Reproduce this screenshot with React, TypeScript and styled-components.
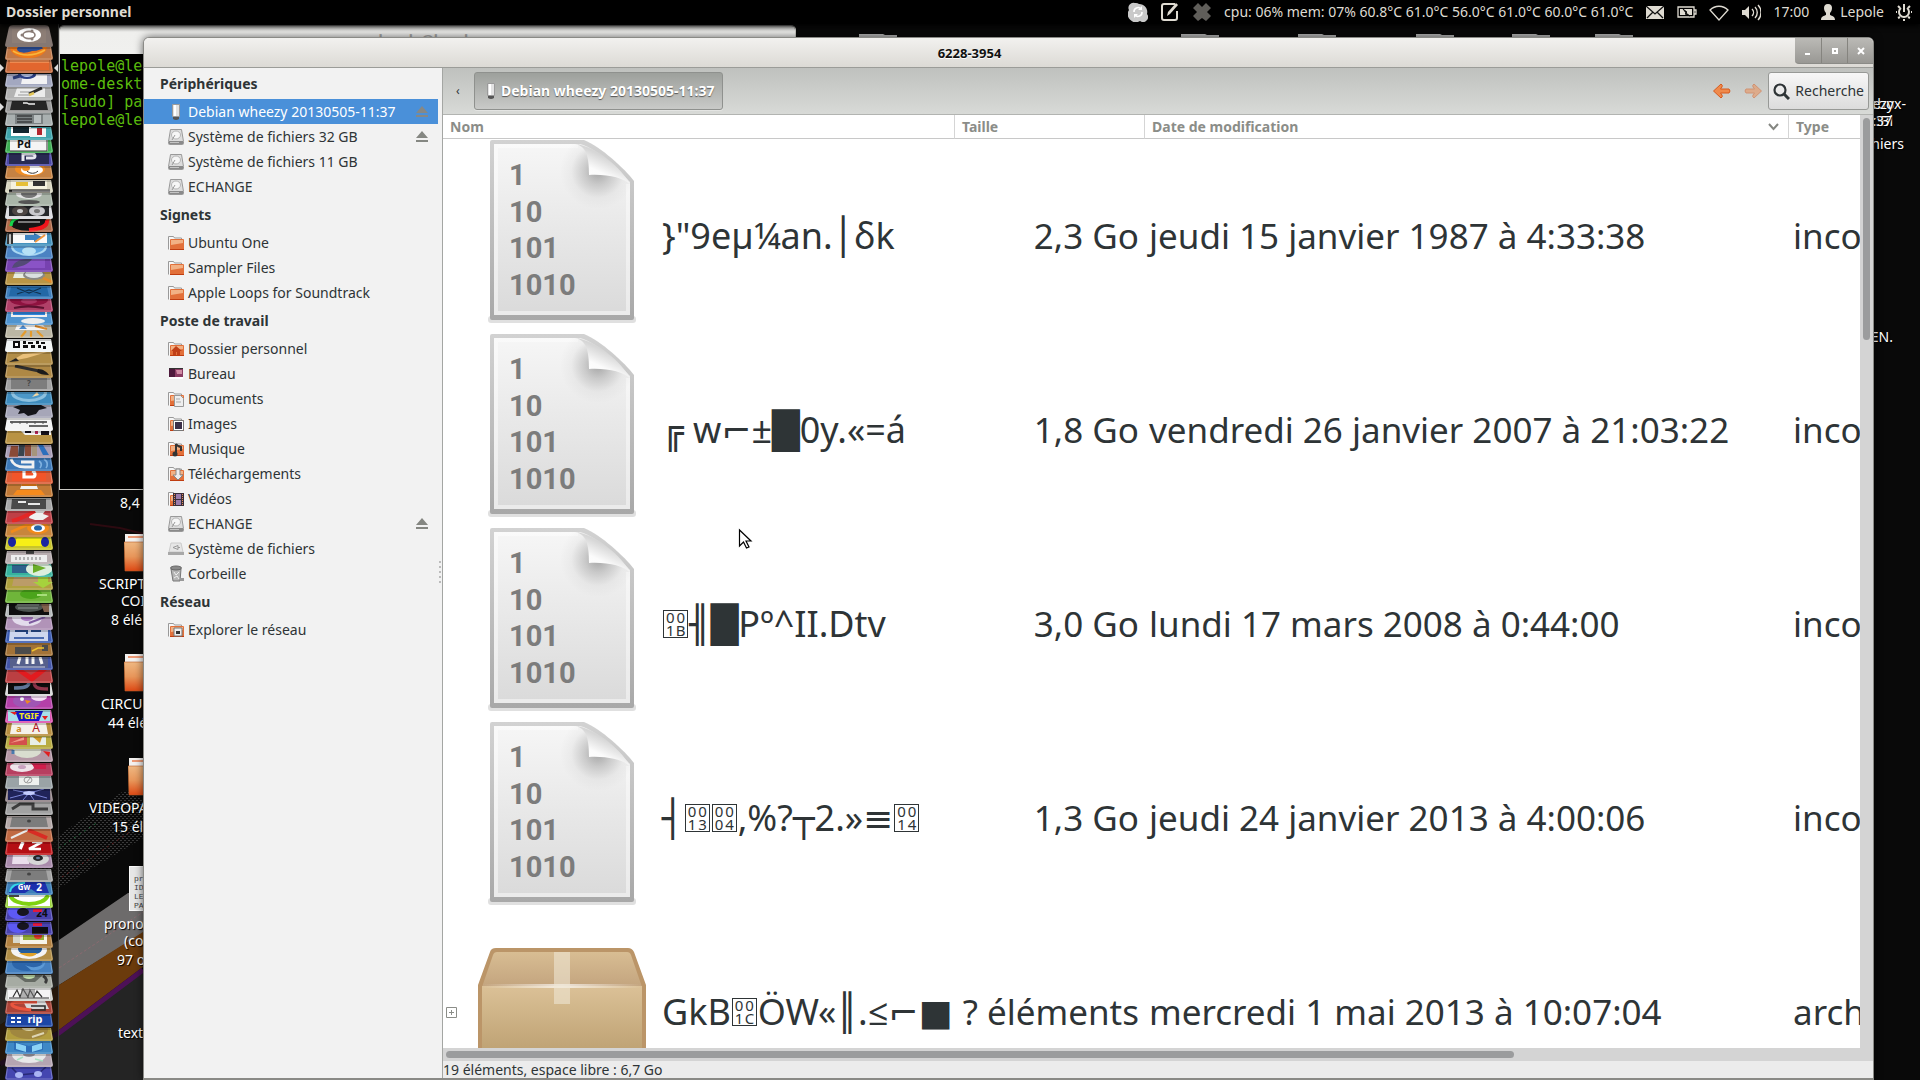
import React from "react";
import styled, { createGlobalStyle, css } from "styled-components";

const UI = '"Noto Sans", "Open Sans", "DejaVu Sans", sans-serif';

const GlobalStyle = createGlobalStyle`
  *, *::before, *::after { box-sizing: border-box; }
  html, body { margin: 0; height: 100%; overflow: hidden; background: #090909; }
  body { font: 14px/20px ${UI}; color: #2e3436; }
  button { font: inherit; color: inherit; border: 0; padding: 0; background: none; }
  ul { list-style: none; margin: 0; padding: 0; }
  svg { display: block; flex: none; }
  h1, h2 { margin: 0; font-size: inherit; }
`;

/* ---------- desktop ---------- */

const Desktop = styled.div`
  position: relative;
  height: 100vh;
  overflow: hidden;
  display: flex;
  flex-direction: column;
  background: #090909;
`;

const Wallpaper = styled.svg`
  position: absolute;
  left: 0;
  bottom: 0;
`;

const Pin = styled.div<{ $x: number; $y: number }>`
  position: absolute;
  left: ${(p) => p.$x}px;
  top: ${(p) => p.$y}px;
  white-space: nowrap;
  color: #fff;
  text-shadow: 1px 1px 1px #000;
`;

const EdgePin = styled.div<{ $right: number; $y: number }>`
  position: absolute;
  right: ${(p) => p.$right}px;
  top: ${(p) => p.$y}px;
  white-space: nowrap;
  color: #fff;
  text-shadow: 1px 1px 1px #000;
`;

const labels: [number, number, string][] = [
  [120, 493, "8,4"],
  [99, 574, "SCRIPT"],
  [121, 591, "COI"],
  [111, 610, "8 élé"],
  [101, 694, "CIRCU"],
  [108, 713, "44 élé"],
  [89, 798, "VIDEOPA"],
  [112, 817, "15 élé"],
  [104, 914, "prono"],
  [124, 931, "(co"],
  [117, 950, "97 o"],
  [118, 1023, "text"],
];

const edgeLabels: [number, number, string][] = [
  [14, 94, "ebox-"],
  [26, 94, "ezy"],
  [27, 111, "c:Bl"],
  [28, 111, ":37"],
  [16, 134, "chiers"],
  [27, 327, "EN."],
];

const tabs = [859, 1181, 1298, 1416, 1512, 1595];

const FolderIcon = () => (
  <svg width="40" height="38">
    <defs>
      <linearGradient id="fo" x1="0" y1="0" x2="0" y2="1">
        <stop offset="0" stopColor="#efb882" />
        <stop offset=".5" stopColor="#e8965a" />
        <stop offset="1" stopColor="#dd4814" />
      </linearGradient>
    </defs>
    <path d="M1 0h38v12H1z" fill="#f3f1ef" />
    <path d="M4 2h30v2H4z" fill="#ec9a76" />
    <path d="M0 8h40l-1 29H1z" fill="url(#fo)" stroke="#b8602c" strokeWidth=".6" />
  </svg>
);

const NoteThumb = styled.div`
  width: 44px;
  height: 45px;
  padding: 7px 4px;
  background: #e6e6e6;
  border: 1px solid #fafafa;
  color: #444;
  font: 8px/9px "Liberation Mono", monospace;
  text-shadow: none;
  overflow: hidden;
`;

/* ---------- top panel ---------- */

const Panel = styled.header`
  position: relative;
  z-index: 3;
  height: 24px;
  flex: none;
  display: flex;
  align-items: center;
  padding: 0 8px 0 6px;
  background: #000;
  color: #dfdbd2;
  box-shadow: 0 2px 5px #000;
`;

const PanelTitle = styled.div`
  flex: 1;
  font-weight: 700;
`;

const Indicators = styled.div`
  display: flex;
  align-items: center;
  gap: 12px;
`;

const Indicator = styled.button`
  display: flex;
  align-items: center;
  gap: 5px;
  white-space: nowrap;
`;

const Ic = ({ children, w = 20 }: { children: React.ReactNode; w?: number }) => (
  <svg width={w} height="20" viewBox={`0 0 ${w} 20`} fill="none" stroke="#dfdbd2" strokeWidth="1.6">
    {children}
  </svg>
);

const TopPanel = () => (
  <Panel>
    <PanelTitle>Dossier personnel</PanelTitle>
    <Indicators>
      <Indicator aria-label="Skype">
        <Ic>
          <path d="M7 1a5 5 0 0 1 4 1 8 8 0 0 1 8 10 5 5 0 0 1-7 7A8 8 0 0 1 1 8a5 5 0 0 1 6-7z" fill="#c9c9c9" stroke="none" />
          <path d="M6 10a4 4 0 0 1 7-3M14 10a4 4 0 0 1-7 3" stroke="#fff" />
          <path d="M14 4v4h-4zM6 16v-4h4z" fill="#fff" stroke="none" />
        </Ic>
      </Indicator>
      <Indicator aria-label="Notes">
        <Ic>
          <path d="M15 2H4a2 2 0 0 0-2 2v12a2 2 0 0 0 2 2h11a2 2 0 0 0 2-2V9" strokeWidth="2" />
          <path d="M18 3l-8 9-3 2 1-4 8-9" fill="#dfdbd2" stroke="none" />
        </Ic>
      </Indicator>
      <Indicator aria-label="Dropbox">
        <Ic>
          <path d="M6 1l4 4 4-4 5 5-4 4 4 4-5 5-4-3-4 3-5-5 4-4-4-4z" fill="#605e5a" stroke="none" />
        </Ic>
      </Indicator>
      <Indicator>cpu: 06% mem: 07% 60.8°C 61.0°C 56.0°C 61.0°C 60.0°C 61.0°C</Indicator>
      <Indicator aria-label="Messages">
        <Ic>
          <path d="M1 4h18v13H1z" fill="#dfdbd2" stroke="none" />
          <path d="M1 4l9 8 9-8M2 16l6-6M18 16l-6-6" stroke="#111" strokeWidth="1.3" />
        </Ic>
      </Indicator>
      <Indicator aria-label="Batterie">
        <Ic>
          <path d="M1 5h16v10H1zM17 8h2v4h-2" strokeWidth="1.3" />
          <path d="M3 7h12v6H3z" fill="#dfdbd2" stroke="none" />
          <path d="M6 7l4 3-1 1 4 3-5-2 1-1z" fill="#000" stroke="#000" strokeWidth=".8" />
        </Ic>
      </Indicator>
      <Indicator aria-label="Réseau sans fil">
        <Ic>
          <path d="M1 8c5-5 13-5 18 0l-9 10z" strokeWidth="1.3" />
        </Ic>
      </Indicator>
      <Indicator aria-label="Volume">
        <Ic>
          <path d="M1 8h3l4-4v13l-4-4H1z" fill="#dfdbd2" stroke="none" />
          <path d="M11 7c2 2 2 5 0 7M14 5c3 3 3 8 0 11M17 3c4 4 4 11 0 15" strokeWidth="1.4" />
        </Ic>
      </Indicator>
      <Indicator>17:00</Indicator>
      <Indicator>
        <Ic w={14}>
          <path d="M7 2c3 0 4 2 4 4s-1 4-2 5v2c2 1 5 1 5 5H0c0-4 3-4 5-5v-2C4 10 3 8 3 6s1-4 4-4z" fill="#dfdbd2" stroke="none" />
        </Ic>
        Lepole
      </Indicator>
      <Indicator aria-label="Session">
        <Ic w={16}>
          <path d="M5 6a5 5 0 1 0 6 0M8 2v8" strokeWidth="2" />
          <path d="M8 17v2M1 10H0M16 10h-1M2 4l2 2M14 4l-2 2M2 16l2-1M14 16l-2-1" strokeWidth="2" />
        </Ic>
      </Indicator>
    </Indicators>
  </Panel>
);

/* ---------- launcher ---------- */

const Launcher = styled.nav`
  position: relative;
  z-index: 1;
  flex: 1;
  min-height: 0;
  width: 59px;
  padding: 1px 0 0 5px;
  display: flex;
  flex-direction: column;
  background: rgba(14, 12, 10, 0.75);
  border-right: 1px solid #3a3a3a;
`;

const Stack = styled.ul`
  flex: 1;
  min-height: 0;
  margin-bottom: -1px;
  display: flex;
  flex-direction: column;
  justify-content: space-between;
`;

const Tile = styled.button`
  display: block;
`;

const Arrow = styled.i<{ $y: number; $right?: boolean }>`
  position: absolute;
  top: ${(p) => p.$y}px;
  border: 4px solid transparent;
  ${(p) =>
    p.$right
      ? css`
          right: 0;
          border-left-width: 0;
          border-right-color: #ddd;
        `
      : css`
          left: 0;
          border-right-width: 0;
          border-left-color: #ddd;
        `}
`;

const T = (x: number, y: number, s: number, f: string, t: string, w = 700) => (
  <text x={x} y={y} fontSize={s} fill={f} fontWeight={w} fontFamily={UI} textAnchor="middle">
    {t}
  </text>
);
const P = (d: string, f: string) => <path d={d} fill={f} />;
const S = (d: string, c: string, w = 1.5) => <path d={d} stroke={c} strokeWidth={w} fill="none" />;
const E = (x: number, y: number, rx: number, ry: number, f: string) => <ellipse cx={x} cy={y} rx={rx} ry={ry} fill={f} />;

type Launch = [string, string, React.ReactNode];
const launch: Launch[] = [
  ["Firefox", "#c07848", <>{P("M5 0h37c0 6-8 11-19 11S5 6 5 0z", "#e8771a")}{E(25, 2, 13, 5, "#2c4f96")}{P("M5 0c8 6 14 7 22 4 6 0 10-2 14-4 0 7-8 11-18 11S6 6 5 0z", "#ee7b1c")}{S("M8 4c8 5 20 6 32-1", "#f8b63c", 1.6)}</>],
  ["Fichiers", "#c4693c", <>{P("M5 0h39v10H5z", "#e2662e")}{P("M5 0h39v3H5z", "#ef8a50")}</>],
  ["Recherche", "#a3a8c0", <>{P("M18 1h24v9H16z", "#f2f2f4")}{S("M8 4l7-2", "#26386f", 3)}{E(22, 1, 9, 4, "#2a3f86")}{E(22, 0, 6, 3, "#b6c4e4")}</>],
  ["Éditeur", "#b3b3b3", <>{P("M12 1h28v9H9z", "#ececec")}{S("M15 5h14M13 8h12", "#999", 1)}{S("M24 7L37 1", "#2a2a2a", 3)}{S("M24 8l5-2", "#e3c65a", 2.5)}</>],
  ["Terminal", "#9c9c9c", <>{P("M7 1h34l2 9H5z", "#262626")}{S("M18 3h4l2 1h6", "#eee", 1.3)}</>],
  ["Calculatrice", "#a9b0b0", <>{P("M10 1h28v10H10z", "#7c8283")}{S("M12 3h15M12 6h15M12 9h15", "#4a4d4e", 1.8)}{P("M29 2h7v8h-7z", "#b9bfbf")}</>],
  ["Photos", "#3fa5ac", <>{P("M6 0h20v9H6z", "#fff")}{P("M8 0h16v6H8z", "#12262e")}{P("M25 1h16v9H25z", "#f4f4f4")}{P("M32 1h5v7h-5z", "#b3252c")}</>],
  ["Pure Data", "#3daf53", <>{P("M5 0h38v11H5z", "#f4f4f4")}{T(19, 8, 11, "#111", "Pd")}{S("M42 0v11H5", "#333", 1)}</>],
  ["Processing", "#4c49a8", <>{P("M4 0h40v11H4z", "#282a52")}{S("M18 8V1h9c4 0 4 4 0 4h-6", "#e8e8f0", 3)}</>],
  ["Scratch", "#c58243", <>{E(25, 3, 15, 7, "#f08e26")}{E(27, 4, 11, 5, "#fff")}{E(21, 2, 4, 3, "#f08e26")}{S("M22 5c3 3 8 3 11 0", "#333", 1)}</>],
  ["Montage", "#d9d6c0", <>{P("M6 0h36v9H6z", "#f5f2df")}{P("M11 2h12v4H11z", "#e6bf36")}{P("M28 1h12v5H28z", "#333")}{S("M4 11h41", "#111", 3)}{S("M7 11h38", "#eee", 0.8)}</>],
  ["Webcam", "#a9b5a8", <>{E(24, 1, 13, 5, "#e3e3e3")}{E(24, 1, 8, 4, "#777")}{E(24, 9, 11, 2, "#555")}</>],
  ["Cassettes", "#dcdce0", <>{P("M4 0h40v10H4z", "#26282b")}{E(15, 5, 8, 5, "#4d4644")}{E(15, 5, 3, 2, "#ccc")}{E(32, 5, 8, 5, "#c9c9cd")}{E(32, 5, 3, 2, "#777")}</>],
  ["Radio", "#b26a48", <>{E(24, 4, 19, 8, "#141414")}{S("M6 7C6-1 14-2 20-2", "#17d24a", 3)}{S("M42 1c1 6-6 9-18 10", "#f0151b", 4)}{S("M13 3h22", "#9a9a9a", 1.5)}</>],
  ["Conversion", "#4492bd", <>{P("M6 0h36v10H6z", "#fafafa")}{P("M2 0h6v11H2z", "#333")}{S("M5 1v10", "#eee", 1.5)}{P("M20 2h9V0l8 4-8 5V7h-9z", "#3d82c0")}{S("M30 9l10-7", "#f0963a", 2)}</>],
  ["Disque", "#4b82c2", <>{E(24, 1, 18, 9, "#a9d7f2")}{E(24, 0, 16, 8, "#5da4df")}{E(24, 5, 7, 4, "#b7e1f6")}</>],
  ["Pinceau", "#7742b0", <>{P("M22 0h18v9H12z", "#8a53c6")}{P("M7 9c3-8 9-8 14-9l6 0c-4 6-12 8-20 9z", "#544a77")}</>],
  ["Recherche de fichiers", "#b99646", <>{P("M10 0h14v6H8z", "#e8efe0")}{E(29, 3, 11, 5, "#8a8a86")}{E(29, 2, 9, 4, "#d9dfe0")}{S("M38 6l9 4", "#e08a2a", 2.5)}</>],
  ["Cube", "#3f7fbc", <>{P("M6 1h36l2 9H4z", "#2368a6")}{S("M12 2l12 5 12-5M12 8l12-4 12 4", "#12324f", 1.3)}</>],
  ["Rosegarden", "#b04068", <>{E(24, 1, 19, 6, "#8f1340")}{S("M9 9c8-2 20-2 30 0", "#5d1230", 2.2)}{E(24, 2, 8, 3, "#a93462")}</>],
  ["Écran", "#4f94d0", <>{P("M6 0h36v5H6z", "#f0f0f0")}{P("M8 0h32v3H8z", "#2f84da")}{E(28, 9, 12, 3, "#eee")}</>],
  ["Dessin", "#bcb7a4", <>{P("M12 0h26l4 5H10z", "#f4f4f4")}{P("M18 0l4 4h-8z", "#4e8ccf")}{S("M16 12l5-6M26 6v6M32 6l6 6", "#e39b2d", 2.2)}{S("M30 1l12 3", "#d9892d", 2)}</>],
  ["QR", "#f2f5f5", <>{P("M8 2h7v7H8zM18 2h3v3h-3zM23 3h5v2h-5zM31 2h3v3h-3zM36 3h4v2h-4zM18 6h5v3h-5zM26 6h4v3h-4zM33 6h3v3h-3zM38 7h3v3h-3z", "#0e0e0e")}{P("M10 4h3v3h-3z", "#fff")}</>],
  ["Crayon", "#b18d47", <>{P("M6 9l12-7 20-2h4L22 6z", "#e9c07a")}{P("M4 10l7-4 3 3z", "#222")}</>],
  ["Peinture", "#ae8845", <>{S("M10 1l24 5", "#2d2d2d", 3)}{P("M33 4c5 0 9 3 11 6-6 0-10-1-12-3z", "#1b1b1b")}</>],
  ["Aide", "#a3a3a3", <>{P("M6 0h36v11H6z", "#7d7d7d")}{T(24, 8, 8, "#444", "?")}</>],
  ["Navigateur", "#3d8bbd", <>{E(24, 1, 18, 9, "#8cc0df")}{E(24, 0, 15, 7, "#4b97c8")}{P("M27 5l5-5 2 3z", "#f4d9a5")}</>],
  ["Inkscape", "#a6a6b8", <>{P("M8 2l8-2h20l6 3-8 2-3 4-8 2-4-3-6 1 2-4z", "#15151a")}</>],
  ["Polices", "#f4f4f4", <>{S("M5 4h37", "#333", 1.6)}{S("M24 8h19", "#444", 1.6)}{S("M7 6v-3M15 6v-3M22 6v-3M30 6v-3M38 6v-3", "#555", 1)}</>],
  ["Pingouin", "#b99344", <>{P("M16 0h30v4H20z", "#f4f4f4")}{P("M20 0h6v2h-6zM36 0h8v4h-8z", "#17121a")}{P("M30 0h3v3h-3z", "#b9295a")}</>],
  ["Livres", "#a89db5", <>{P("M6 1h7v11H4zM20 0h6v11h-6z", "#8a4a37")}{P("M14 0h6l-1 11h-6z", "#39434d")}{P("M26 0h6v11h-5z", "#a5957c")}{P("M33 0h5l6 10h-6z", "#2d6fbc")}</>],
  ["Wifi", "#3d79b8", <>{S("M6 1c2 6 6 8 14 8h8V4H16", "#f1f1f1", 2.8)}{S("M34 3c3 2 3 4 1 7M39 1c4 3 4 6 2 9", "#7fb1e0", 1.6)}</>],
  ["Dosbox", "#dd5c36", <>{P("M7 0h34v10H7z", "#f2552a")}{S("M19 0v6h8c4 0 4-5 0-6", "#fff", 3.2)}</>],
  ["VLC", "#c27a36", <>{P("M17 0h14l2 5H15z", "#f2f2f2")}{P("M17 0h14l1 2H16z", "#e67d19")}{P("M12 6h24l4 5H8z", "#f58a1d")}</>],
  ["TS Craft", "#a8a8a8", <>{P("M7 1h34v10H6z", "#4a4a4a")}{S("M13 4h8M23 6h12", "#e8e8e8", 2)}</>],
  ["Outils", "#bf3f46", <>{P("M26 0h14l-2 3 6 2-6 4-8 0-6-2z", "#f0f0f0")}{S("M7 10C16 8 22 4 30 0", "#e32727", 4)}</>],
  ["Blender", "#c8853c", <>{S("M6 8L22 1h12", "#f28a1a", 3)}{E(33, 4, 11, 6, "#f28a1a")}{E(33, 4, 7, 4, "#fff")}{E(33, 4, 4, 2.6, "#2465a8")}</>],
  ["Casque", "#c9c52a", <>{P("M12 1h26l4 8H8z", "#f7ef16")}{E(7, 5, 4, 5, "#1a24a0")}{E(40, 5, 4, 5, "#1a24a0")}</>],
  ["Règle", "#b9aeb0", <>{P("M6 4h36v7H6z", "#eee")}{P("M21 0h8v3h-8z", "#444")}{S("M11 6v3M15 6v3M19 6v3M23 6v3M27 6v3M31 6v3M35 6v3", "#777", 1)}</>],
  ["Lecture", "#36b39d", <>{P("M7 1h16v8H7z", "#2f628c")}{E(34, 5, 13, 7, "#ddeedd")}{P("M28 0l13 4-13 5z", "#6aae29")}</>],
  ["Téléchargement", "#b0a13e", <>{P("M9 0h25v9H7z", "#bb9c68")}{P("M33 0h10v5h5L38 11 28 5h5z", "#a6d23c")}</>],
  ["Ballon", "#6fb53a", <>{E(26, 4, 11, 5, "#4ba41b")}{P("M32 4h10v2H32z", "#a7de7a")}</>],
  ["Micro", "#b5b9ba", <>{P("M4 0h40v11H4z", "#0f0f0f")}{E(24, 3, 14, 5, "#4c5350")}{S("M12 1h22M13 4h20", "#8b9490", 1)}{P("M36 0h8v8h-5z", "#80604c")}</>],
  ["CD", "#b193b8", <>{E(22, 1, 15, 8, "#e3dcec")}{E(22, 1, 6, 3, "#a978c2")}{S("M24 6l16-6", "#7d5aa0", 2)}</>],
  ["Tableur", "#3b5cb3", <>{P("M5 0h38v11H4z", "#cdd7ee")}{S("M10 1h12v3M26 1h10", "#274a8a", 2)}{S("M9 8h30", "#4b6cb0", 2)}</>],
  ["Circuit", "#a37337", <>{P("M10 4h16v7H10zM37 2h6v6h-6z", "#4b4b4b")}{S("M27 8l6-3h6", "#f0c531", 1.5)}</>],
  ["Titres", "#4356a8", <>{P("M5 0h38v11H5z", "#56608c")}{S("M15 0l-2 7M22 0v7M28 0v7M35 0l2 7", "#f4f4f4", 3)}{S("M8 10h32", "#c7cce0", 1)}</>],
  ["Vue", "#bb3f42", <>{P("M10 0h8l8 5 8-5h8L27 12z", "#e21b1f")}</>],
  ["SC", "#d7d7d7", <>{P("M3 0h42v11H3z", "#0c0c0c")}{S("M9 5c10 0 14-1 15-5", "#5f7597", 3.5)}{S("M43 6c-12 0-13-2-14-6", "#8e3449", 3.5)}</>],
  ["Pidgin", "#b440a8", <>{E(22, 5, 14, 7, "#9f56b4")}{E(34, 1, 8, 4, "#f5dff4")}{P("M20 4l6 1-4 3z", "#ef8a21")}{E(17, 3, 2, 2, "#f4f4f4")}</>],
  ["TGIF", "#dc4fae", <>{P("M3 0h42v11H3z", "#a8dfea")}{P("M10 1h28l-4 10H14z", "#1717c4")}{T(24, 9, 9, "#f5e81b", "TGIF")}{P("M5 2h7l-2 3zM37 6h6l-3 4z", "#e31d1d")}</>],
  ["Dictionnaire", "#b98f40", <>{P("M7 0h34l2 11H5z", "#f5f2ea")}{T(14, 9, 9, "#c98a28", "a")}{T(31, 9, 12, "#b3171d", "A", 400)}</>],
  ["Images", "#b8ac41", <>{P("M5 1h17v8H4z", "#d3504c")}{P("M25 1h16v8H25z", "#e8efe6")}{P("M28 1h9l-2 6z", "#cf9a28")}{P("M5 7l14-6v3z", "#f19a8a")}</>],
  ["Base", "#b598a6", <>{E(22, 2, 14, 7, "#d9ddcf")}{S("M8 1v4", "#4a7aae", 3)}{P("M38 2l7 1-1 5z", "#e01e20")}</>],
  ["Gravure", "#b73f60", <>{E(17, 4, 12, 5, "#efe4ea")}{E(17, 4, 4, 2, "#c9a2c0")}{P("M27 1h14v5H30z", "#d01e4c")}</>],
  ["Graphe", "#9aa3a6", <>{P("M14 0h20v9H14z", "#eef1ef")}{S("M19 4a4 3 0 1 0 8 0a4 3 0 1 0-8 0M22 6l4-5", "#999", 1)}</>],
  ["Éclairs", "#8d7f84", <>{P("M3 0h42v11H3z", "#20245a")}{S("M5 9L24 4 42 9M8 1l16 3 15-4M18 11l6-7 5 7", "#7c86d8", 1)}{E(24, 4, 6, 2, "#c4cdfd")}</>],
  ["Signal", "#a2a2a2", <>{S("M7 7l8-5h13v5h15", "#3c3c3c", 3)}</>],
  ["Tiroir", "#b4a9a8", <>{P("M7 1h34l2 10H5z", "#7c7c7c")}{E(24, 5, 2, 1.5, "#444")}</>],
  ["Réglages", "#c16a43", <>{S("M6 9L23 1", "#e9e9e9", 2.2)}{S("M23 1l19 8", "#d82c24", 4)}</>],
  ["Douze", "#c2181c", <>{P("M3 0h42v11H3z", "#b40f14")}{S("M18 0l-3 7", "#fff", 3.5)}{S("M27 0h10L24 7h12", "#fff", 2.6)}</>],
  ["Capture", "#a98bab", <>{P("M8 0h16v9H7z", "#eadfec")}{E(33, 4, 11, 6, "#d7d7d7")}{E(33, 3, 5, 3, "#26262a")}{E(33, 3, 2, 1.3, "#679")}</>],
  ["Archives", "#a4a4a4", <>{P("M7 1h34l2 10H5z", "#7d7d7d")}{E(24, 5, 2, 1.5, "#444")}</>],
  ["GW2", "#3c7fba", <>{P("M4 11C5 3 12 0 22 0h18l4 11H32l-6-4-6 4z", "#1c2fae")}{S("M5 10C6 4 12 1 20 1", "#34d7e8", 2)}{T(19, 8, 8, "#fff", "Gw")}{T(34, 9, 10, "#fff", "2")}</>],
  ["Cercle", "#9bd43d", <>{P("M3 0h42v11H3z", "#fff")}{S("M5 0c4 12 34 12 38 0", "#7fd211", 4)}{P("M4 0h10v2H4z", "#555")}</>],
  ["Cinelerra 24", "#4942ad", <>{E(13, 4, 10, 7, "#5d59f4")}{E(18, 4, 6, 4, "#17151f")}{T(37, 9, 10, "#0c0c10", "24")}{P("M28 1h9v3h-9z", "#df193f")}</>],
  ["Cinelerra", "#4942ad", <>{E(13, 4, 10, 7, "#5d59f4")}{E(18, 4, 6, 4, "#17151f")}{P("M27 5h16v7H27z", "#0c0c10")}{P("M28 1h9v3h-9z", "#df193f")}</>],
  ["Photothèque", "#b38140", <>{P("M8 0h12v8H8z", "#d8d8cc")}{P("M15 0h27v9H15z", "#f6f3e8")}{P("M18 0h21v5H18z", "#93ae36")}{E(33, 1, 4, 3, "#dc3526")}</>],
  ["Globe", "#b28e47", <>{E(24, 2, 18, 9, "#f4f4f4")}{E(25, 1, 12, 6, "#255f9e")}{P("M14 5h18c-2 4-10 5-18 0z", "#dfa22a")}</>],
  ["Thunderbird", "#4580c0", <>{E(22, 2, 15, 8, "#2c65aa")}{P("M20 4c8 4 16 2 20-3 0 6-6 9-14 8z", "#5c9ad6")}</>],
  ["Souris", "#a6aba3", <>{P("M10 0h28l-8 7H20z", "#656a63")}{E(24, 1, 6, 3, "#bedaa8")}{S("M38 1c4 2 4 5 2 7", "#3b3b3b", 3)}</>],
  ["Ardour", "#cfd2cf", <>{P("M3 0h42v11H3z", "#f4f4f4")}{S("M4 10h40M8 9l4-7 3 7 3-8 5 8 2-7 4 7 3-6 5 6", "#333", 1.2)}{P("M16 1h14v8H16z", "#7778")}</>],
  ["Câble", "#ad4438", <>{P("M18 0h22l4 8H22z", "#d8d8d8")}{S("M32 1C22 1 8 0 7 3s8 5 20 6", "#ea553e", 3.2)}{S("M26 5h14v4H26", "#2b2b2b", 1.6)}</>],
  ["Rip", "#224ba8", <>{P("M3 0h42v11H3z", "#1c46a6")}{P("M6 3h4v2H6zM12 3h4v2h-4zM6 7h4v2H6zM12 7h4v2h-4z", "#fff")}{T(30, 9, 11, "#fff", "rip")}</>],
  ["Disque doré", "#b29d3e", <>{E(24, 2, 19, 9, "#a0873f")}{E(24, 0, 7, 3, "#d8cfa2")}{S("M27 9l12-4", "#ded6b4", 2)}</>],
  ["Mixxx", "#3e88c6", <>{P("M9 1l15 4 14-4v8l-12 3h-4L9 9z", "#2d6fb8")}{P("M11 2l10 3v6L11 8zM37 2L27 5v6l10-3z", "#8bd2f5")}</>],
  ["Lecteur CD", "#b5a5b2", <>{E(24, 1, 17, 8, "#e8e8ea")}{E(24, 0, 6, 3, "#9b96a0")}{S("M30 5l8 2M12 6l6-3", "#a7dfc0", 1.5)}</>],
  ["Tracé", "#4446b0", <>{S("M7 1l7 7 20-2 7-6", "#282a78", 1.5)}{E(14, 8, 4, 3, "#a9b4f4")}{E(33, 7, 4, 3, "#a9b4f4")}</>],
];

const LauncherBar = () => (
  <Launcher>
    <Tile aria-label="Accueil">
      <svg width="48" height="22">
        <path d="M4 2q1-2 4-2h32q3 0 4 2l4 18q0 2-2 2H2q-2 0-2-2z" fill="#857873" />
        <path d="M7 4h34v14H7z" fill="#96847a" opacity=".5" />
        <ellipse cx="24" cy="10" rx="12" ry="7" fill="#fff" />
        <ellipse cx="24" cy="10" rx="6" ry="3.6" fill="none" stroke="#8a7c76" strokeWidth="1.6" />
        <circle cx="17" cy="10" r="1.5" fill="#8a7c76" />
        <circle cx="27" cy="6" r="1.5" fill="#8a7c76" />
        <circle cx="27" cy="14" r="1.5" fill="#8a7c76" />
      </svg>
    </Tile>
    <Stack>
      {launch.map(([name, color, art]) => (
        <li key={name}>
          <Tile aria-label={name}>
            <svg width="48" height="13">
              <path d="M2 0h44l2 11q0 2-2 2H2q-2 0-2-2z" fill={color} />
              {art}
              <path d="M2.5 0L1 11q0 1 1 1h44q1 0 1-1L45.500 0" fill="none" stroke="#fff" strokeOpacity=".28" />
              <path d="M2 0h44v2H2z" fill="#000" opacity=".18" />
            </svg>
          </Tile>
        </li>
      ))}
    </Stack>
    <Arrow $y={40} />
    <Arrow $y={79} />
    <Arrow $y={40} $right />
  </Launcher>
);

/* ---------- terminal ---------- */

const TerminalWindow = styled.section`
  position: absolute;
  left: 59px;
  top: 25px;
  width: 737px;
  height: 465px;
  background: #000;
  border: 1px solid #c9c8c3;
  border-top-color: #888;
  border-radius: 5px 5px 0 0;
`;

const TerminalTitle = styled.div`
  height: 28px;
  padding-top: 4px;
  text-align: center;
  font-weight: 700;
  color: #aaa;
  background: linear-gradient(#b5b5b2, #efefed 6px, #f0f0ee);
  border-radius: 4px 4px 0 0;
`;

const TerminalText = styled.pre`
  margin: 3px 1px;
  color: #5cbf0e;
  font: 15px/18px "DejaVu Sans Mono", "Liberation Mono", monospace;
`;

/* ---------- file manager ---------- */

const FileWindow = styled.main`
  position: absolute;
  z-index: 2;
  left: 143px;
  right: 46px;
  top: 37px;
  bottom: 0;
  display: flex;
  flex-direction: column;
  background: #f2f2f2;
  border: 1px solid #8a8a86;
  border-bottom-width: 2px;
  border-radius: 6px 6px 0 0;
  overflow: hidden;
  box-shadow: 0 0 8px rgba(0, 0, 0, 0.6);
`;

const TitleBar = styled.header`
  flex: none;
  height: 30px;
  display: flex;
  background: linear-gradient(#f2f1ef, #dcdad5);
  border-bottom: 1px solid #9b9c98;
  color: #111;
`;

const TitleText = styled.h1`
  flex: 1;
  text-align: center;
  font-size: 13px;
  line-height: 30px;
  font-weight: 700;
  text-shadow: 0 1px #fff;
`;

const WindowButtons = styled.div`
  width: 78px;
  height: 26px;
  display: grid;
  grid-template-columns: repeat(3, 1fr);
  background: linear-gradient(#bbbab6, #999894);
  border-bottom: 1px solid #8b8b87;
  border-radius: 0 0 0 4px;
`;

const WindowButton = styled.button`
  display: grid;
  place-items: center;
  & + & { border-left: 1px solid #85847f; }
`;

const Body = styled.div`
  flex: 1;
  min-height: 0;
  display: flex;
`;

const Sidebar = styled.nav`
  position: relative;
  flex: none;
  width: 299px;
  padding-right: 4px;
  background: #f2f2f2;
  border-right: 1px solid #a4a6a3;
`;

const Grip = styled.i`
  position: absolute;
  right: 1px;
  top: 493px;
  width: 2px;
  height: 24px;
  background: repeating-linear-gradient(#bbb 0 2px, transparent 2px 5px);
`;

const GroupTitle = styled.h2`
  padding: 0 16px;
  line-height: 31px;
  font-weight: 700;
`;

const Place = styled.button<{ $active?: boolean }>`
  width: 100%;
  height: 25px;
  padding: 0 10px 0 24px;
  display: flex;
  align-items: center;
  gap: 4px;
  text-align: left;
  ${(p) => p.$active && css`
    background: #4a90d9;
    color: #fff;
  `}
`;

const PlaceName = styled.span`
  flex: 1;
  white-space: nowrap;
`;

const Usb = () => (
  <svg width="16" height="18">
    <path d="M4.500 1.500h7v12h-7z" fill="#e2e2e2" stroke="#9a9a9a" />
    <path d="M6 2h2v11H6z" fill="#fff" />
    <path d="M5 14h6v2q-3 2-6 0z" fill="#555" />
  </svg>
);

const Disk = () => (
  <svg width="16" height="16">
    <path d="M2.500.5h11l2 12v2q0 1-1 1h-13q-1 0-1-1v-2z" fill="#dcdcdc" stroke="#999" />
    <ellipse cx="8" cy="6" rx="4.500" ry="4" fill="#f6f6f6" stroke="#b5b5b5" />
    <path d="M7 6l-3 5" stroke="#999" />
    <path d="M1 12h14v3H1z" fill="#8a8a8a" />
    <path d="M2 13h9v1H2z" fill="#c4c4c4" />
  </svg>
);

const Drive = () => (
  <svg width="16" height="16">
    <path d="M3 2h10l2 9H1z" fill="#e6e6e6" stroke="#ccc" />
    <path d="M5 6.500l5-2v4zM10 6.500h2" fill="none" stroke="#999" />
    <path d="M0 11h16v3H0z" fill="#a8a8a8" />
  </svg>
);

const Trash = () => (
  <svg width="16" height="18">
    <path d="M3 4h10l-1 12H5z" fill="#b5b5b5" stroke="#777" />
    <ellipse cx="8" cy="3" rx="5.500" ry="2" fill="#8a8a8a" stroke="#666" />
    <path d="M6 7l2 3 3-3M6 13l3-2 2 3" stroke="#eee" fill="none" />
    <path d="M12 13h4v3h-4z" fill="#999" />
  </svg>
);

const Desk = () => (
  <svg width="16" height="16">
    <path d="M1 2h14v11H1z" fill="#fff" />
    <path d="M1 2h14v9H1z" fill="#8a3b62" />
    <path d="M1 2h6v9H1z" fill="#4e1a3c" />
    <path d="M8 4h6v4H9z" fill="#cf8ba4" />
    <path d="M1 2h14v1H1z" fill="#333" />
  </svg>
);

const marks: Record<string, React.ReactNode> = {
  plain: null,
  home: <path d="M3 10l5-5 6 5h-2v4H9v-3H8v3H5v-4z" fill="#c03f17" />,
  doc: <><path d="M6.500 4.500h6l3 3v8h-9z" fill="#eee" stroke="#999" /><path d="M8 8h4M8 11h5" stroke="#aaa" /></>,
  image: <><path d="M5.500 4.500h10v10h-10z" fill="#fff" stroke="#777" /><path d="M7 6h7v7H7z" fill="#3b3048" /></>,
  music: <><path d="M8 13V3q1 2 5 3v4" fill="none" stroke="#333" strokeWidth="2" /><circle cx="7" cy="13" r="2.500" fill="#333" /></>,
  down: <path d="M8 3h4v6h3l-5 5-5-5h3z" fill="#eee" stroke="#888" />,
  video: <><path d="M5 2h11v13H5z" fill="#392f3a" /><path d="M8 3h5v5H8zM8 9h5v5H8z" fill="#9a7bab" /><path d="M6.500 3v12M14.500 3v12" stroke="#e88a55" strokeDasharray="1 1" /></>,
  net: <><path d="M6 6h8v8H6z" fill="#eee" stroke="#777" /><path d="M8 9h4v3H8z" fill="#333" /></>,
};

const Folder = ({ mark = "plain" }: { mark?: string }) => (
  <svg width="16" height="16">
    <path d="M.5 14.500V1.500h5l1 1.500h7v5" fill="#f7f7f7" stroke="#999" />
    <path d="M2 5q0-1 1-1h12q1 0 1 1v10H2z" fill="#e2703a" />
    <path d="M3 5h12v3L3 10z" fill="#f2b184" />
    <path d="M2 14h14v1H2z" fill="#bf3d10" />
    {marks[mark]}
  </svg>
);

const Eject = ({ dim }: { dim?: boolean }) => (
  <svg width="12" height="12" fill={dim ? "#868885" : "#858782"}>
    <path d="M6 0l6 7H0zM0 9h12v2H0z" />
  </svg>
);

type Item = { icon: React.ReactNode; name: string; active?: boolean; eject?: boolean };
const groups: { title: string; items: Item[] }[] = [
  {
    title: "Périphériques",
    items: [
      { icon: <Usb />, name: "Debian wheezy 20130505-11:37", active: true, eject: true },
      { icon: <Disk />, name: "Système de fichiers 32 GB", eject: true },
      { icon: <Disk />, name: "Système de fichiers 11 GB" },
      { icon: <Disk />, name: "ECHANGE" },
    ],
  },
  {
    title: "Signets",
    items: [
      { icon: <Folder />, name: "Ubuntu One" },
      { icon: <Folder />, name: "Sampler Files" },
      { icon: <Folder />, name: "Apple Loops for Soundtrack" },
    ],
  },
  {
    title: "Poste de travail",
    items: [
      { icon: <Folder mark="home" />, name: "Dossier personnel" },
      { icon: <Desk />, name: "Bureau" },
      { icon: <Folder mark="doc" />, name: "Documents" },
      { icon: <Folder mark="image" />, name: "Images" },
      { icon: <Folder mark="music" />, name: "Musique" },
      { icon: <Folder mark="down" />, name: "Téléchargements" },
      { icon: <Folder mark="video" />, name: "Vidéos" },
      { icon: <Disk />, name: "ECHANGE", eject: true },
      { icon: <Drive />, name: "Système de fichiers" },
      { icon: <Trash />, name: "Corbeille" },
    ],
  },
  { title: "Réseau", items: [{ icon: <Folder mark="net" />, name: "Explorer le réseau" }] },
];

const Content = styled.section`
  flex: 1;
  min-width: 0;
  display: flex;
  flex-direction: column;
`;

const Toolbar = styled.div`
  flex: none;
  height: 47px;
  padding: 4px 4px 4px 10px;
  display: flex;
  align-items: center;
  background: linear-gradient(#bfc1be, #d8dad7);
  border-bottom: 1px solid #b2b4b1;
`;

const Spacer = styled.div`
  flex: 1;
`;

const Chevron = styled.button`
  width: 21px;
  line-height: 20px;
  text-align: left;
  padding-left: 3px;
  font-size: 12px;
`;

const PathButton = styled.button`
  height: 38px;
  padding: 0 8px;
  display: flex;
  align-items: center;
  gap: 2px;
  border: 1px solid #8f918e;
  border-radius: 3px;
  background: linear-gradient(#9da09c, #c9cac8);
  box-shadow: 0 1px #e4e5e3;
  color: #fff;
  font-weight: 700;
  text-shadow: 0 1px 1px #555;
`;

const NavButton = styled.button<{ $off?: boolean }>`
  width: 31px;
  display: grid;
  place-items: center;
  opacity: ${(p) => (p.$off ? 0.5 : 1)};
`;

const SearchButton = styled.button`
  height: 38px;
  padding: 0 4px;
  display: flex;
  align-items: center;
  gap: 5px;
  border: 1px solid #979996;
  border-radius: 3px;
  background: linear-gradient(#f7f7f7, #dcdcdc);
`;

const ArrowIcon = ({ flip }: { flip?: boolean }) => (
  <svg width="20" height="18" viewBox="0 0 20 18">
    <path
      d="M9 2L1.500 9 9 16q2-1 1-3l-1.500-2H17q2-2 0-4H8.500L10 5q1-2-1-3z"
      fill="#ef8a4c"
      stroke="#d65a1e"
      transform={flip ? "matrix(-1 0 0 1 20 0)" : undefined}
    />
  </svg>
);

const ViewRow = styled.div`
  flex: 1;
  min-height: 0;
  display: flex;
`;

const ListArea = styled.div`
  flex: 1;
  min-width: 0;
  overflow: hidden;
  background: #fff;
`;

const FileTable = styled.table`
  width: 100%;
  table-layout: fixed;
  border-collapse: separate;
  border-spacing: 0;
`;

const Col = styled.col<{ $w?: number }>`
  width: ${(p) => (p.$w ? `${p.$w}px` : "auto")};
`;

const Head = styled.th`
  height: 24px;
  padding: 0 2px 0 7px;
  text-align: left;
  font-weight: 700;
  color: #8b8d88;
  border-bottom: 1px solid #c8c8c8;
  background: #fff;
  white-space: nowrap;
  & + & { border-left: 1px solid #d5d5d5; }
`;

const SortHead = styled.div`
  display: flex;
  align-items: center;
  justify-content: space-between;
  padding-right: 7px;
`;

const Cell = styled.td`
  height: 194px;
  padding: 0 0 0 5px;
  font-size: 35px;
  line-height: 48px;
  white-space: nowrap;
  overflow: hidden;
`;

const SizeCell = styled(Cell)`
  padding: 0 5px 0 0;
`;

const SizeText = styled.div`
  display: flex;
  justify-content: flex-end;
`;

const NameCell = styled(Cell)`
  padding: 0;
  font-size: 36px;
`;

const NameRow = styled.div`
  display: flex;
  align-items: center;
  height: 194px;
`;

const Expand = styled.span`
  width: 23px;
  padding-left: 3px;
  flex: none;
`;

const FileName = styled.span`
  padding-left: 4px;
  display: flex;
  align-items: center;
  white-space: pre;
`;

const Hex = styled.span`
  display: grid;
  grid-template-columns: 1fr 1fr;
  width: 25px;
  height: 28px;
  margin: 0 1px;
  padding: 0 1px;
  border: 1px solid #2e3436;
  font-size: 15px;
  line-height: 13px;
  text-align: center;
`;

const VScroll = styled.div`
  flex: none;
  width: 13px;
  padding: 3px;
  background: #d4d4d4;
`;

const VThumb = styled.div`
  height: 24%;
  border-radius: 4px;
  background: #9b9c9d;
`;

const HScroll = styled.div`
  flex: none;
  height: 13px;
  padding: 3px;
  background: #d4d4d4;
`;

const HThumb = styled.div`
  width: 75%;
  height: 7px;
  border-radius: 4px;
  background: #9b9c9d;
`;

const Status = styled.footer`
  flex: none;
  height: 17px;
  line-height: 17px;
  background: #ececec;
`;

const Pointer = styled.svg`
  position: absolute;
  z-index: 4;
  left: 738px;
  top: 525px;
`;

const FileIcon = () => (
  <svg width="192" height="194">
    <defs>
      <linearGradient id="pg" x1="0" y1="0" x2="0" y2="1">
        <stop offset="0" stopColor="#f6f6f6" />
        <stop offset="1" stopColor="#dadada" />
      </linearGradient>
      <linearGradient id="pe" x1="0" y1="0" x2="0" y2="1">
        <stop offset="0" stopColor="#d2d2d2" />
        <stop offset="1" stopColor="#a8a8a8" />
      </linearGradient>
      <linearGradient id="cu" x1=".1" y1=".9" x2=".5" y2=".3">
        <stop offset="0" stopColor="#fff" />
        <stop offset=".5" stopColor="#fbfbfb" />
        <stop offset="1" stopColor="#d6d6d6" />
      </linearGradient>
      <radialGradient id="sh" cx=".55" cy=".45" r=".5">
        <stop offset="0" stopColor="#000" stopOpacity=".32" />
        <stop offset=".35" stopColor="#000" stopOpacity=".16" />
        <stop offset=".7" stopColor="#000" stopOpacity=".03" />
        <stop offset="1" stopColor="#000" stopOpacity="0" />
      </radialGradient>
      <clipPath id="pc">
        <path d="M28 5h86c18 5 39 26 50 38v133H28z" />
      </clipPath>
    </defs>
    <rect x="22" y="177" width="148" height="7" rx="3" fill="#000" opacity=".12" />
    <path d="M26 1h92c17 7 40 28 50 41v137q0 2-2 2H26q-2 0-2-2V3q0-2 2-2z" fill="url(#pe)" />
    <path d="M28 5h86c18 5 39 26 50 38v133H28z" fill="url(#pg)" />
    <path d="M162 45v129H30V7h82" fill="none" stroke="#fff" strokeOpacity=".45" strokeWidth="4" />
    <ellipse cx="128" cy="36" rx="38" ry="38" fill="url(#sh)" clipPath="url(#pc)" />
    <path d="M109 5c12 2 14 14 14 31 19-1 34 3 41 9-8-15-33-38-55-40z" fill="url(#cu)" />
    {["1", "10", "101", "1010"].map((t, i) => (
      <text key={t} x="43" y={46 + i * 36.6} fontSize="29" fontWeight="700" fontFamily='Roboto, "Noto Sans", sans-serif' fill="#7c7c7c">
        {t}
      </text>
    ))}
  </svg>
);

const PackageIcon = () => (
  <svg width="192" height="194">
    <defs>
      <linearGradient id="b1" x1="0" y1="0" x2="0" y2="1">
        <stop offset="0" stopColor="#d8bd93" />
        <stop offset="1" stopColor="#c3a47e" />
      </linearGradient>
      <linearGradient id="b2" x1="0" y1="0" x2="0" y2="1">
        <stop offset="0" stopColor="#dbc197" />
        <stop offset="1" stopColor="#a88a58" />
      </linearGradient>
      <linearGradient id="b3" x1="0" y1="0" x2="1" y2="0">
        <stop offset="0" stopColor="#fff" stopOpacity="0" />
        <stop offset=".5" stopColor="#fff" stopOpacity=".7" />
        <stop offset="1" stopColor="#fff" stopOpacity="0" />
      </linearGradient>
    </defs>
    <path d="M30 33h132q4 0 6 4l12 33v120H12V70l12-33q1-4 6-4z" fill="#bb9568" />
    <path d="M31 37h130q3 0 4 3l11 32H16l11-32q1-3 4-3z" fill="url(#b1)" />
    <path d="M16 71h160v115H16z" fill="url(#b2)" />
    <path d="M16 69h160v4H16z" fill="url(#b3)" />
    <path d="M88 37h16v52H88z" fill="#efe6d4" opacity=".6" />
  </svg>
);

const hex = (a: string, b: string) => (
  <Hex>
    {[...a, ...b].map((c, i) => (
      <span key={i}>{c}</span>
    ))}
  </Hex>
);

const files: { name: React.ReactNode; size: string; date: string; type: string; box?: boolean }[] = [
  { name: '}"9eµ¼an.│δk', size: "2,3 Go", date: "jeudi 15 janvier 1987 à 4:33:38", type: "inco" },
  { name: "╔ w⌐±█0y.«=á", size: "1,8 Go", date: "vendredi 26 janvier 2007 à 21:03:22", type: "inco" },
  { name: <>{hex("00", "1B")}╢█Pº^II.Dtv</>, size: "3,0 Go", date: "lundi 17 mars 2008 à 0:44:00", type: "inco" },
  { name: <>┤{hex("00", "13")}{hex("00", "04")},%?┬2.»≡{hex("00", "14")}</>, size: "1,3 Go", date: "jeudi 24 janvier 2013 à 4:00:06", type: "inco" },
  { name: <>GkB{hex("00", "1C")}ÖW«║.≤⌐■</>, size: "? éléments", date: "mercredi 1 mai 2013 à 10:07:04", type: "arch", box: true },
];

export default function App() {
  return (
    <Desktop>
      <GlobalStyle />
      <Wallpaper width="150" height="330" viewBox="0 750 150 330">
        <defs>
          <pattern id="dots" width="4" height="4" patternUnits="userSpaceOnUse">
            <path d="M0 0h2v1H0zM2 2h2v1H2z" fill="#3a3a3a" />
          </pattern>
        </defs>
        <path d="M0 865L59 835 125 790 143 800v38L59 888 0 930z" fill="url(#dots)" />
        <path d="M0 975L59 940 128 893h15v40L59 985 0 1025z" fill="#6d6b6b" />
        <path d="M59 968L143 912" stroke="#8a6a70" strokeDasharray="3 2" />
        <path d="M0 1025L59 985 143 932v35L59 1030 0 1062z" fill="#6b3b0c" />
        <path d="M0 1066L59 1035 143 972v108H0z" fill="#242424" />
        <path d="M0 1064L59 1033 143 970" fill="none" stroke="#4d1157" strokeWidth="5" />
        <path d="M62 877L130 832" stroke="#5a1a1a" strokeDasharray="2 4" />
        <path d="M59 848L98 822" stroke="#1f6a3a" strokeDasharray="2 4" />
      </Wallpaper>
      <Pin $x={88} $y={520}>
        <svg width="60" height="14"><path d="M2 4l30 4 24 6" stroke="#2c0a10" strokeWidth="2" fill="none" /></svg>
      </Pin>
      <Pin $x={124} $y={534}><FolderIcon /></Pin>
      <Pin $x={124} $y={654}><FolderIcon /></Pin>
      <Pin $x={128} $y={758}><FolderIcon /></Pin>
      <Pin $x={129} $y={866}><NoteThumb>pr<br />ID<br />LE<br />PA</NoteThumb></Pin>
      {tabs.map((x) => (
        <Pin key={x} $x={x} $y={34}>
          <svg width="40" height="4"><path d="M0 0h24l2 1h12v3H0z" fill="#b5b5b5" /></svg>
        </Pin>
      ))}
      {labels.map(([x, y, t]) => (
        <Pin key={t} $x={x} $y={y}>{t}</Pin>
      ))}
      {edgeLabels.map(([x, y, t]) => (
        <EdgePin key={t} $right={x} $y={y}>{t}</EdgePin>
      ))}

      <TerminalWindow>
        <TerminalTitle>lepole@lepole</TerminalTitle>
        <TerminalText>{"lepole@le\nome-deskt\n[sudo] pa\nlepole@le"}</TerminalText>
      </TerminalWindow>

      <TopPanel />
      <LauncherBar />

      <FileWindow>
        <TitleBar>
          <TitleText>6228-3954</TitleText>
          <WindowButtons>
            <WindowButton aria-label="Réduire"><svg width="8" height="8"><path d="M1 6h5v2H1z" fill="#fff" /></svg></WindowButton>
            <WindowButton aria-label="Agrandir"><svg width="8" height="8"><path d="M2 2h4v4H2z" fill="none" stroke="#fff" strokeWidth="2" /></svg></WindowButton>
            <WindowButton aria-label="Fermer"><svg width="8" height="8"><path d="M1 1l6 6M7 1L1 7" stroke="#fff" strokeWidth="2" /></svg></WindowButton>
          </WindowButtons>
        </TitleBar>
        <Body>
          <Sidebar>
            {groups.map((g) => (
              <React.Fragment key={g.title}>
                <GroupTitle>{g.title}</GroupTitle>
                <ul>
                  {g.items.map((it) => (
                    <li key={it.name}>
                      <Place $active={it.active}>
                        {it.icon}
                        <PlaceName>{it.name}</PlaceName>
                        {it.eject && <Eject dim={it.active} />}
                      </Place>
                    </li>
                  ))}
                </ul>
              </React.Fragment>
            ))}
            <Grip />
          </Sidebar>
          <Content>
            <Toolbar>
              <Chevron>‹</Chevron>
              <PathButton><Usb />Debian wheezy 20130505-11:37</PathButton>
              <Spacer />
              <NavButton aria-label="Précédent"><ArrowIcon /></NavButton>
              <NavButton aria-label="Suivant" $off><ArrowIcon flip /></NavButton>
              <SearchButton>
                <svg width="17" height="17" fill="none" stroke="#2e3436">
                  <circle cx="7" cy="7" r="5.500" strokeWidth="2.200" />
                  <path d="M11 11l5 5" strokeWidth="3" />
                </svg>
                Recherche
              </SearchButton>
            </Toolbar>
            <ViewRow>
              <ListArea>
                <FileTable>
                  <colgroup>
                    <Col $w={511} />
                    <Col $w={190} />
                    <Col $w={644} />
                    <Col />
                  </colgroup>
                  <thead>
                    <tr>
                      <Head>Nom</Head>
                      <Head>Taille</Head>
                      <Head>
                        <SortHead>
                          Date de modification
                          <svg width="11" height="8"><path d="M1 1l4.500 5L10 1" fill="none" stroke="#858782" strokeWidth="2" /></svg>
                        </SortHead>
                      </Head>
                      <Head>Type</Head>
                    </tr>
                  </thead>
                  <tbody>
                    {files.map((f) => (
                      <tr key={f.date}>
                        <NameCell>
                          <NameRow>
                            <Expand>
                              {f.box && (
                                <svg width="11" height="11"><path d="M.5.5h10v10H.5zM3 5.500h5M5.500 3v5" fill="none" stroke="#8b8d88" /></svg>
                              )}
                            </Expand>
                            {f.box ? <PackageIcon /> : <FileIcon />}
                            <FileName>{f.name}</FileName>
                          </NameRow>
                        </NameCell>
                        <SizeCell><SizeText>{f.size}</SizeText></SizeCell>
                        <Cell>{f.date}</Cell>
                        <Cell>{f.type}</Cell>
                      </tr>
                    ))}
                  </tbody>
                </FileTable>
              </ListArea>
              <VScroll><VThumb /></VScroll>
            </ViewRow>
            <HScroll><HThumb /></HScroll>
            <Status>19 éléments, espace libre : 6,7 Go</Status>
          </Content>
        </Body>
      </FileWindow>

      <Pointer width="18" height="26" viewBox="0 -4 18 26">
        <path d="M1.500 1v16l4-4 3 6 2.500-1-3-6h5z" fill="#fff" stroke="#000" strokeWidth="1.200" />
      </Pointer>
    </Desktop>
  );
}
